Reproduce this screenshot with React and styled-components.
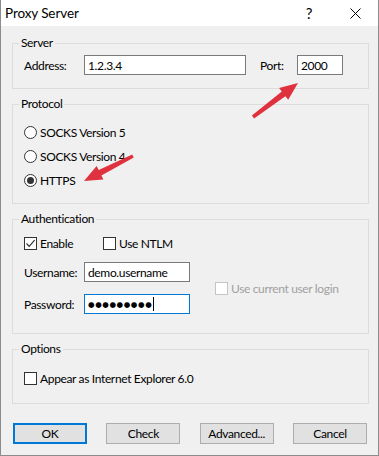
import React from 'react';
import styled, { createGlobalStyle } from 'styled-components';

const GlobalStyle = createGlobalStyle`
  html, body {
    margin: 0;
    padding: 0;
    background: #ffffff;
  }
  body {
    font-family: 'Segoe UI', Lato, 'Noto Sans', sans-serif;
    font-size: 12px;
    letter-spacing: -0.35px;
    color: #000;
  }
`;

const Window = styled.div`
  position: relative;
  width: 379px;
  height: 456px;
  box-sizing: border-box;
  border: 1px solid #8c8c8c;
  border-top: none;
  background: #f0f0f0;
  display: flex;
  flex-direction: column;
`;

const TitleBar = styled.div`
  height: 26px;
  flex: none;
  display: flex;
  align-items: center;
  background: #ffffff;
`;

const Title = styled.div`
  flex: 1;
  padding-left: 4px;
  font-size: 13.5px;
  letter-spacing: -0.1px;
  line-height: 26px;
`;

const CaptionButton = styled.div`
  width: 46px;
  height: 26px;
  display: flex;
  align-items: center;
  justify-content: center;
  font-size: 15px;
`;

const Body = styled.div`
  flex: 1;
  display: flex;
  flex-direction: column;
  gap: 7px;
  padding: 9px 9px 0 11px;
`;

const Group = styled.fieldset`
  margin: 0;
  padding: 0;
  min-width: 0;
  border: 1px solid #dcdcdc;
`;

const Legend = styled.legend`
  margin-left: 6px;
  padding: 0 2px;
  line-height: 16px;
  font-size: 12px;
`;

const GroupContent = styled.div`
  padding: ${(p) => p.$pad};
`;

const Row = styled.div`
  display: flex;
  align-items: center;
  height: ${(p) => p.$h || 20}px;
`;

const FieldLabel = styled.span`
  width: ${(p) => p.$w}px;
  flex: none;
`;

const TextBox = styled.input`
  width: ${(p) => p.$w}px;
  height: 20px;
  box-sizing: border-box;
  margin: 0;
  padding: 0 3px;
  border: 1px solid ${(p) => (p.$focused ? '#0078d7' : '#7a7a7a')};
  background: #fff;
  font: inherit;
  font-size: 12px;
  letter-spacing: -0.35px;
  color: #000;
  outline: none;
`;

const PasswordBox = styled.div`
  width: ${(p) => p.$w}px;
  height: 20px;
  box-sizing: border-box;
  padding: 0 3px;
  border: 1px solid #0078d7;
  background: #fff;
  display: flex;
  align-items: center;
`;

const Dots = styled.span`
  font-family: 'DejaVu Sans', sans-serif;
  font-size: 7.5px;
  letter-spacing: 0.6px;
  color: #000;
`;

const Caret = styled.span`
  width: 1px;
  height: 14px;
  background: #000;
  margin-left: 1px;
`;

const Choice = styled.label`
  display: flex;
  align-items: center;
  gap: 3px;
  width: ${(p) => (p.$w ? `${p.$w}px` : 'auto')};
  height: ${(p) => p.$h || 20}px;
  color: ${(p) => (p.$disabled ? '#a0a0a0' : '#000')};
`;

const RadioCircle = styled.span`
  width: 13px;
  height: 13px;
  box-sizing: border-box;
  border-radius: 50%;
  border: 1px solid #333;
  background: #fff;
  display: flex;
  align-items: center;
  justify-content: center;
`;

const RadioDot = styled.span`
  width: 7px;
  height: 7px;
  border-radius: 50%;
  background: #333;
`;

const CheckBox = styled.span`
  width: 13px;
  height: 13px;
  box-sizing: border-box;
  border: 1px solid ${(p) => (p.$disabled ? '#c4c4c4' : '#333')};
  background: #fff;
  display: flex;
  align-items: center;
  justify-content: center;
`;

const FieldArea = styled.div`
  display: flex;
  align-items: center;
  margin-top: 9px;
`;

const FieldColumn = styled.div`
  display: flex;
  flex-direction: column;
  gap: 12px;
`;

const SideOption = styled.div`
  margin-left: 25px;
`;

const ButtonBar = styled.div`
  display: flex;
  justify-content: space-between;
  margin-top: 12px;
  padding: 0 2px 0 1px;
`;

const Button = styled.button`
  width: 74px;
  height: 21px;
  box-sizing: border-box;
  margin: 0;
  padding: 0;
  border: ${(p) => (p.$default ? '2px solid #0078d7' : '1px solid #adadad')};
  background: #e1e1e1;
  font: inherit;
  font-size: 12px;
  letter-spacing: -0.35px;
  color: #000;
`;

const Overlay = styled.svg`
  position: absolute;
  left: 0;
  top: 0;
  pointer-events: none;
`;

function Radio({ checked, children }) {
  return (
    <Choice $h={24}>
      <RadioCircle>{checked && <RadioDot />}</RadioCircle>
      {children}
    </Choice>
  );
}

function Check({ checked, disabled, width, children }) {
  return (
    <Choice $w={width} $disabled={disabled}>
      <CheckBox $disabled={disabled}>
        {checked && (
          <svg width="11" height="11" viewBox="0 0 11 11">
            <path d="M1.5 5.5 L4.2 8.3 L9.6 2.2" fill="none" stroke="#333" strokeWidth="1.2" />
          </svg>
        )}
      </CheckBox>
      {children}
    </Choice>
  );
}

// tapered arrow shape from tail to tip
function arrowPoints([tx, ty], [hx, hy]) {
  const len = Math.hypot(hx - tx, hy - ty);
  const dx = (hx - tx) / len;
  const dy = (hy - ty) / len;
  const nx = -dy;
  const ny = dx;
  const hl = 18;
  const bx = hx - dx * hl;
  const by = hy - dy * hl;
  const pts = [
    [tx + nx * 1.8, ty + ny * 1.8],
    [bx + nx * 3, by + ny * 3],
    [bx + nx * 7.5, by + ny * 7.5],
    [hx, hy],
    [bx - nx * 7.5, by - ny * 7.5],
    [bx - nx * 3, by - ny * 3],
    [tx - nx * 1.8, ty - ny * 1.8],
  ];
  return pts.map((p) => p.map((v) => v.toFixed(1)).join(',')).join(' ');
}

export default function App() {
  return (
    <Window>
      <GlobalStyle />
      <TitleBar>
        <Title>Proxy Server</Title>
        <CaptionButton>?</CaptionButton>
        <CaptionButton>
          <svg width="11" height="11" viewBox="0 0 11 11">
            <path d="M0.5 0.5 L10.5 10.5 M10.5 0.5 L0.5 10.5" stroke="#000" strokeWidth="1" />
          </svg>
        </CaptionButton>
      </TitleBar>

      <Body>
        <Group>
          <Legend>Server</Legend>
          <GroupContent $pad="4px 0 13px 11px">
            <Row>
              <FieldLabel $w={60}>Address:</FieldLabel>
              <TextBox $w={162} defaultValue="1.2.3.4" readOnly />
              <FieldLabel $w={37} style={{ marginLeft: 14 }}>Port:</FieldLabel>
              <TextBox $w={46} defaultValue="2000" readOnly />
            </Row>
          </GroupContent>
        </Group>

        <Group>
          <Legend>Protocol</Legend>
          <GroupContent $pad="8px 0 11px 11px">
            <Radio>SOCKS Version 5</Radio>
            <Radio>SOCKS Version 4</Radio>
            <Radio checked>HTTPS</Radio>
          </GroupContent>
        </Group>

        <Group>
          <Legend>Authentication</Legend>
          <GroupContent $pad="6px 0 19px 11px">
            <Row>
              <Check checked width={79}>Enable</Check>
              <Check>Use NTLM</Check>
            </Row>
            <FieldArea>
              <FieldColumn>
                <Row>
                  <FieldLabel $w={60}>Username:</FieldLabel>
                  <TextBox $w={106} defaultValue="demo.username" readOnly />
                </Row>
                <Row>
                  <FieldLabel $w={60}>Password:</FieldLabel>
                  <PasswordBox $w={106}>
                    <Dots>●●●●●●●●●</Dots>
                    <Caret />
                  </PasswordBox>
                </Row>
              </FieldColumn>
              <SideOption>
                <Check disabled>Use current user login</Check>
              </SideOption>
            </FieldArea>
          </GroupContent>
        </Group>

        <Group>
          <Legend>Options</Legend>
          <GroupContent $pad="11px 0 15px 11px">
            <Check>Appear as Internet Explorer 6.0</Check>
          </GroupContent>
        </Group>

        <ButtonBar>
          <Button $default>OK</Button>
          <Button>Check</Button>
          <Button>Advanced...</Button>
          <Button>Cancel</Button>
        </ButtonBar>
      </Body>

      <Overlay width="379" height="456" viewBox="0 0 379 456">
        <polygon points={arrowPoints([252, 117], [297, 83])} fill="#e0313f" />
        <polygon points={arrowPoints([132, 156], [83, 181])} fill="#e0313f" />
      </Overlay>
    </Window>
  );
}
